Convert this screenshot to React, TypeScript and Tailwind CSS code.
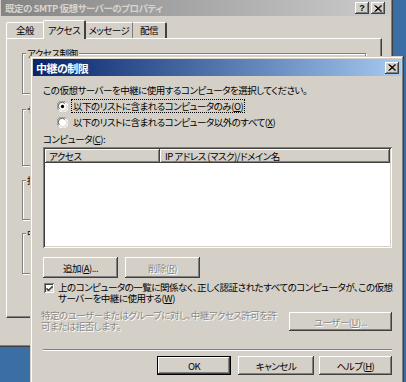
import React from "react";

const FONT = "font-['Noto_Sans_CJK_JP','Noto_Sans_CJK_SC',sans-serif] [font-feature-settings:'palt'] tracking-[-0.5px]";
const RAISED =
  "shadow-[inset_-1px_-1px_#404040,inset_1px_1px_#ffffff,inset_-2px_-2px_#808080,inset_2px_2px_#d4d0c8]";
const FRAME =
  "shadow-[inset_-1px_-1px_#404040,inset_1px_1px_#d4d0c8,inset_-2px_-2px_#808080,inset_2px_2px_#ffffff]";
const SUNKEN =
  "shadow-[inset_1px_1px_#808080,inset_-1px_-1px_#ffffff,inset_2px_2px_#404040,inset_-2px_-2px_#d4d0c8]";
const DISABLED = "text-[#8c8a86] [text-shadow:1px_1px_0_#ffffff]";
const TXT = "text-[9.5px]";

function U({ c }: { c: string }) {
  return <span className="underline underline-offset-[1px]">{c}</span>;
}

function CloseGlyph() {
  return (
    <svg width="8" height="7" viewBox="0 0 8 7">
      <path d="M0.5 0.5 L7 6.5 M1.5 0.5 L8 6.5 M7 0.5 L0.5 6.5 M8 0.5 L1.5 6.5" stroke="#000" strokeWidth="1" fill="none" />
    </svg>
  );
}

function TitleBtn({ children }: { children: React.ReactNode }) {
  return (
    <div className={`w-[14px] h-[12px] bg-[#d4d0c8] ${RAISED} flex items-center justify-center`}>{children}</div>
  );
}

function Btn({
  children,
  className = "",
  disabled = false,
  def = false,
}: {
  children: React.ReactNode;
  className?: string;
  disabled?: boolean;
  def?: boolean;
}) {
  const inner = (
    <div
      className={`h-full w-full bg-[#d4d0c8] ${RAISED} flex items-center justify-center ${TXT} leading-[12px] whitespace-nowrap ${
        disabled ? DISABLED : "text-black"
      }`}
    >
      {children}
    </div>
  );
  if (def) {
    return <div className={`border border-black ${className}`}>{inner}</div>;
  }
  return <div className={className}>{inner}</div>;
}

function Radio({ checked }: { checked?: boolean }) {
  return (
    <svg width="11" height="11" viewBox="0 0 12 12" className="shrink-0">
      <circle cx="6" cy="6" r="5.5" fill="#ffffff" />
      <path d="M1.5 9.5 A5.3 5.3 0 0 1 9.5 1.5" stroke="#808080" strokeWidth="1" fill="none" />
      <path d="M2.6 8.6 A4.2 4.2 0 0 1 8.6 2.6" stroke="#404040" strokeWidth="1" fill="none" />
      <path d="M10.5 2.5 A5.3 5.3 0 0 1 2.5 10.5" stroke="#ffffff" strokeWidth="1" fill="none" />
      <path d="M9.4 3.4 A4.2 4.2 0 0 1 3.4 9.4" stroke="#d4d0c8" strokeWidth="1" fill="none" />
      {checked && <circle cx="6" cy="6" r="1.8" fill="#000" />}
    </svg>
  );
}

function GroupBox({ label, h, mt }: { label: string; h: string; mt: string }) {
  return (
    <div
      className={`relative ${h} ${mt} border border-[#808080] shadow-[inset_1px_1px_#ffffff,1px_1px_#ffffff]`}
    >
      <span className={`absolute left-[3px] top-[-7px] bg-[#d4d0c8] px-[1px] ${TXT} leading-[12px] text-black whitespace-nowrap`}>
        {label}
      </span>
    </div>
  );
}

export default function App() {
  return (
    <div className={`relative w-[406px] h-[382px] overflow-hidden bg-[#3a6ea5] ${FONT}`}>
      {/* Back window */}
      <div className={`absolute left-[-2px] top-[-3px] w-[395px] h-[350px] bg-[#d4d0c8] ${FRAME} p-[3px] flex flex-col`}>
        <div className="h-[16px] shrink-0 bg-gradient-to-r from-[#848484] to-[#cccccc] flex items-center pl-[4px] pr-[5px]">
          <span className="text-[9.5px] font-bold text-[#d8d4cc] leading-[14px] whitespace-nowrap">
            既定の SMTP 仮想サーバーのプロパティ
          </span>
          <div className="ml-auto flex gap-[2px]">
            <TitleBtn>
              <span className="text-[9px] font-bold leading-[10px] text-black font-['Liberation_Sans',sans-serif] tracking-normal">?</span>
            </TitleBtn>
            <TitleBtn>
              <CloseGlyph />
            </TitleBtn>
          </div>
        </div>
        {/* tabs */}
        <div className={`mt-[3px] ml-[5px] h-[19px] flex items-end relative z-10 ${TXT} text-black`}>
          <div className="h-[16px] w-[37px] border-l border-t border-white rounded-tl-[2px] flex items-center justify-center">
            全般
          </div>
          <div className="h-[19px] mb-[-1px] w-[43px] bg-[#d4d0c8] border-l border-t border-white border-r-2 border-r-[#404040] rounded-t-[2px] flex items-center justify-center">
            アクセス
          </div>
          <div className="h-[16px] w-[47px] border-t border-white border-r border-r-[#808080] flex items-center justify-center">
            メッセージ
          </div>
          <div className="h-[16px] w-[34px] border-t border-white border-r-2 border-r-[#404040] rounded-tr-[2px] flex items-center justify-center">
            配信
          </div>
        </div>
        {/* panel */}
        <div className="ml-[5px] mr-[8px] h-[280px] border-l border-t border-white border-r border-b border-r-[#404040] border-b-[#404040] shadow-[inset_-1px_-1px_#808080] px-[15px] pt-[14px] flex flex-col">
          <GroupBox label="アクセス制御" h="h-[41px]" mt="mt-0" />
          <GroupBox label="セキュリティで保護された通信" h="h-[57px]" mt="mt-[15px]" />
          <GroupBox label="接続制御" h="h-[40px]" mt="mt-[14px]" />
          <GroupBox label="中継の制限" h="h-[41px]" mt="mt-[13px]" />
        </div>
      </div>

      {/* Front dialog */}
      <div className={`absolute left-[30px] top-[56px] w-[374px] h-[340px] bg-[#d4d0c8] ${FRAME} p-[3px] flex flex-col text-black`}>
        <div className="h-[17px] shrink-0 bg-gradient-to-r from-[#0a246a] to-[#a6caf0] flex items-center pl-[3px] pr-[2px]">
          <span className="text-[11px] font-bold text-white leading-[14px]">中継の制限</span>
          <div className="ml-auto">
            <TitleBtn>
              <CloseGlyph />
            </TitleBtn>
          </div>
        </div>
        <div className={`pl-[10px] pr-[9px] flex flex-col ${TXT} leading-[12px]`}>
          <div className="mt-[8px] h-[12px] whitespace-nowrap">
            この仮想サーバーを中継に使用するコンピュータを選択してください。
          </div>
          <div className="mt-[2px] h-[16px] flex items-center pl-[14px] gap-[3px]">
            <Radio checked />
            <span className="border border-dotted border-black px-[1px] whitespace-nowrap">
              以下のリストに含まれるコンピュータのみ(<U c="O" />)
            </span>
          </div>
          <div className="h-[16px] flex items-center pl-[14px] gap-[3px]">
            <Radio />
            <span className="px-[2px] whitespace-nowrap">
              以下のリストに含まれるコンピュータ以外のすべて(<U c="X" />)
            </span>
          </div>
          <div className="mt-[3px] h-[12px] whitespace-nowrap">
            コンピュータ(<U c="C" />):
          </div>
          <div className={`mt-[2px] h-[101px] bg-white ${SUNKEN} p-[2px] flex flex-col`}>
            <div className="h-[14px] flex">
              <div className={`w-[115px] bg-[#d4d0c8] ${RAISED} pl-[4px] flex items-center whitespace-nowrap`}>アクセス</div>
              <div className={`flex-1 bg-[#d4d0c8] ${RAISED} pl-[5px] flex items-center whitespace-pre`}>
                IP アドレス (マスク)/ドメイン名
              </div>
            </div>
          </div>
          <div className="mt-[9px] h-[21px] flex gap-[7px]">
            <Btn className="w-[75px] h-full">
              追加(<U c="A" />)...
            </Btn>
            <Btn className="w-[75px] h-full" disabled>
              削除(<U c="R" />)
            </Btn>
          </div>
          <div className="mt-[4px] flex items-start">
            <div className={`mt-[1px] ml-[1px] w-[10px] h-[10px] bg-white ${SUNKEN} flex items-center justify-center shrink-0`}>
              <svg width="7" height="7" viewBox="0 0 7 7">
                <path d="M0.5 3 L2.5 5 L6.5 1 M0.5 4 L2.5 6 L6.5 2" stroke="#000" strokeWidth="1" fill="none" />
              </svg>
            </div>
            <div className="ml-[4px] leading-[11px] whitespace-nowrap">
              上のコンピュータの一覧に関係なく、正しく認証されたすべてのコンピュータが、この仮想
              <br />
              サーバーを中継に使用する(<U c="W" />)
            </div>
          </div>
          <div className="mt-[6px] flex items-start">
            <div className={`-ml-[2px] leading-[11px] whitespace-nowrap ${DISABLED}`}>
              特定のユーザーまたはグループに対し、中継アクセス許可を許
              <br />
              可または拒否します。
            </div>
            <Btn className="ml-auto mt-[2px] w-[103px] h-[19px]" disabled>
              ユーザー(<U c="U" />)...
            </Btn>
          </div>
          <div className="mt-[17px] h-[2px] border-t border-[#808080] border-b border-b-white" />
          <div className="mt-[5px] h-[19px] flex justify-end">
            <Btn className="w-[74px] h-full" def>
              OK
            </Btn>
            <Btn className="ml-[7px] w-[76px] h-full">キャンセル</Btn>
            <Btn className="ml-[5px] w-[73px] h-full">
              ヘルプ(<U c="H" />)
            </Btn>
          </div>
        </div>
      </div>
    </div>
  );
}
